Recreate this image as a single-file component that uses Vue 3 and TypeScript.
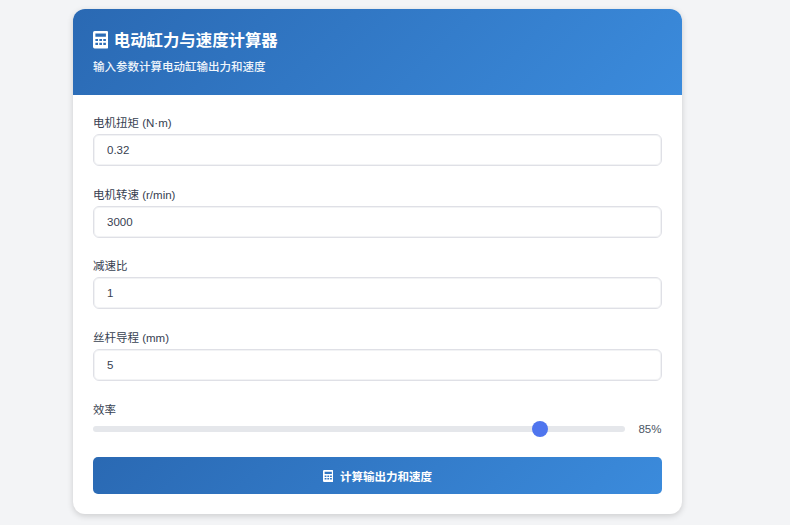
<script setup lang="ts">
import { ref } from 'vue'

const fields = ref([
  { label: '电机扭矩 (N·m)', value: '0.32' },
  { label: '电机转速 (r/min)', value: '3000' },
  { label: '减速比', value: '1' },
  { label: '丝杆导程 (mm)', value: '5' },
])
const efficiency = ref(85)
</script>

<template>
  <main class="page">
    <section class="card">
      <header class="head">
        <h1 class="title">
          <svg class="icon-lg" viewBox="1 0 14 16" aria-hidden="true">
            <path fill="currentColor" fill-rule="evenodd" d="M2.500 0h11A1.500 1.500 0 0 1 15 1.500v13a1.500 1.500 0 0 1-1.500 1.500h-11A1.500 1.500 0 0 1 1 14.500v-13A1.500 1.500 0 0 1 2.500 0ZM3.200 2.200v3h9.600v-3H3.200ZM3.200 7.200v2h2.400v-2H3.200Zm3.600 0v2h2.400v-2H6.800Zm3.600 0v2h2.400v-2h-2.400ZM3.200 10.800v2h2.400v-2H3.200Zm3.600 0v2h2.400v-2H6.800Zm3.600 0v2h2.400v-2h-2.400Z" />
          </svg>
          <span>电动缸力与速度计算器</span>
        </h1>
        <p class="sub">输入参数计算电动缸输出力和速度</p>
      </header>
      <form class="body" @submit.prevent>
        <div v-for="f in fields" :key="f.label" class="field">
          <label class="label">{{ f.label }}</label>
          <input v-model="f.value" class="input" type="text" />
        </div>
        <div class="field eff">
          <label class="label">效率</label>
          <div class="slider-row">
            <input v-model="efficiency" class="range" type="range" min="0" max="100" />
            <span class="pct">{{ efficiency }}%</span>
          </div>
        </div>
        <button class="btn" type="button">
          <svg class="icon-sm" viewBox="1 0 14 16" aria-hidden="true">
            <path fill="currentColor" fill-rule="evenodd" d="M2.500 0h11A1.500 1.500 0 0 1 15 1.500v13a1.500 1.500 0 0 1-1.500 1.500h-11A1.500 1.500 0 0 1 1 14.500v-13A1.500 1.500 0 0 1 2.500 0ZM3.200 2.200v3h9.600v-3H3.200ZM3.200 7.200v2h2.400v-2H3.200Zm3.600 0v2h2.400v-2H6.800Zm3.600 0v2h2.400v-2h-2.400ZM3.200 10.800v2h2.400v-2H3.200Zm3.600 0v2h2.400v-2H6.800Zm3.600 0v2h2.400v-2h-2.400Z" />
          </svg>
          <span>计算输出力和速度</span>
        </button>
      </form>
    </section>
  </main>
</template>

<style>
html, body { margin: 0; background: #f3f4f6; }
</style>

<style scoped>
.page {
  height: 525px;
  overflow: hidden;
  padding: 9px 0 0 73px;
  box-sizing: border-box;
  font-family: "Liberation Sans", "Noto Sans CJK SC", sans-serif;
}
.card {
  width: 608.500px;
  height: 505px;
  background: #fff;
  border-radius: 12px;
  overflow: hidden;
  box-shadow: 0 2px 6px rgba(0, 0, 0, 0.16);
}
.head {
  height: 86px;
  box-sizing: border-box;
  padding: 20px 20px 0;
  color: #fff;
  background: linear-gradient(135deg, #2a69b3, #3b8bdc);
}
.title {
  display: flex;
  align-items: center;
  gap: 6px;
  margin: 0 0 0 -0.500px;
  font-size: 16.400px;
  line-height: 22px;
  font-weight: 700;
}
.icon-lg { width: 15.300px; height: 17.500px; flex: none; }
.sub {
  margin: 8px 0 0;
  font-size: 11.500px;
  line-height: 16px;
  font-weight: 500;
  color: #f0f5fb;
}
.body {
  display: flex;
  flex-direction: column;
  padding: 20px 20px 0;
}
.field { margin-bottom: 20.700px; }
.label {
  display: block;
  font-size: 11.500px;
  line-height: 16px;
  margin-bottom: 3px;
  color: #374151;
}
.input {
  display: block;
  width: 100%;
  height: 32px;
  box-sizing: border-box;
  padding: 0 13px;
  border: 1px solid #dfe0e6;
  border-radius: 6px;
  box-shadow: inset 0 0 0 1px rgba(229, 231, 235, 0.5);
  background: #fff;
  color: #374151;
  font: 11.500px "Liberation Sans", "Noto Sans CJK SC", sans-serif;
  outline: none;
}
.eff { margin-bottom: 20.700px; }
.slider-row {
  display: flex;
  align-items: center;
  gap: 13px;
  height: 16px;
}
.range {
  flex: 1;
  min-width: 0;
  height: 6px;
  margin: 0;
  appearance: none;
  -webkit-appearance: none;
  border-radius: 3px;
  background: #e5e7eb;
  outline: none;
}
.range::-webkit-slider-thumb {
  -webkit-appearance: none;
  width: 16px;
  height: 16px;
  border-radius: 50%;
  background: #4f75ee;
}
.pct {
  font-size: 11.500px;
  color: #4b5563;
}
.btn {
  display: flex;
  align-items: center;
  justify-content: center;
  gap: 7px;
  height: 37px;
  border: 0;
  border-radius: 5px;
  color: #fff;
  font: 700 11.500px "Liberation Sans", "Noto Sans CJK SC", sans-serif;
  background: linear-gradient(135deg, #2a69b3, #3b8bdc);
}
.icon-sm { width: 10.500px; height: 12px; flex: none; }
</style>
